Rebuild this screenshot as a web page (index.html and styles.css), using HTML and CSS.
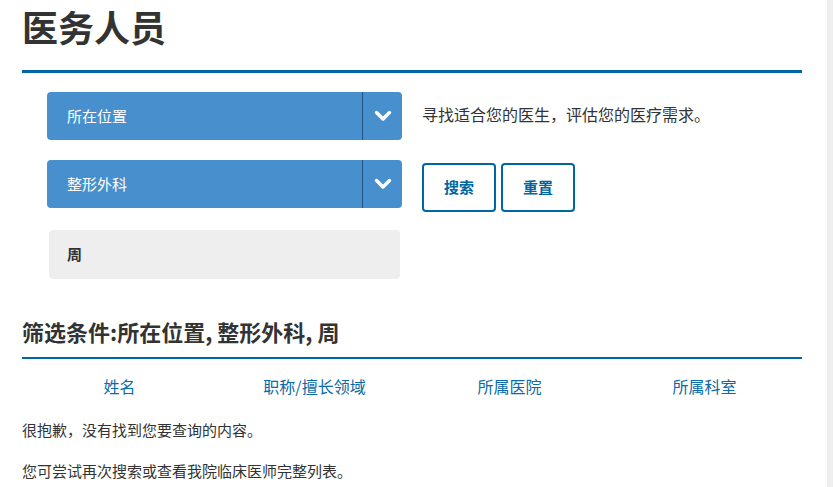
FILE: index.html
```html
<!DOCTYPE html>
<html lang="zh-CN">
<head>
<meta charset="utf-8">
<title>医务人员</title>
<link rel="stylesheet" href="styles.css">
</head>
<body>
<div class="page">
  <header class="page-header">
    <h1 class="page-title">医务人员</h1>
  </header>

  <section class="finder">
    <div class="finder-fields">
      <div class="select">
        <span class="select-label">所在位置</span>
        <span class="select-arrow">
          <svg width="18" height="12" viewBox="0 0 18 12"><polyline points="2.5,2.5 9,9 15.5,2.5" fill="none" stroke="#fff" stroke-width="3.4" stroke-linecap="round" stroke-linejoin="round"/></svg>
        </span>
      </div>
      <div class="select">
        <span class="select-label">整形外科</span>
        <span class="select-arrow">
          <svg width="18" height="12" viewBox="0 0 18 12"><polyline points="2.5,2.5 9,9 15.5,2.5" fill="none" stroke="#fff" stroke-width="3.4" stroke-linecap="round" stroke-linejoin="round"/></svg>
        </span>
      </div>
      <div class="text-input">周</div>
    </div>
    <div class="finder-side">
      <p class="finder-desc">寻找适合您的医生，评估您的医疗需求。</p>
      <div class="finder-actions">
        <button class="btn" type="button">搜索</button>
        <button class="btn" type="button">重置</button>
      </div>
    </div>
  </section>

  <h2 class="filter-title">筛选条件:所在位置, 整形外科, 周</h2>

  <div class="columns">
    <span class="col">姓名</span>
    <span class="col">职称/擅长领域</span>
    <span class="col">所属医院</span>
    <span class="col">所属科室</span>
  </div>

  <p class="message first">很抱歉，没有找到您要查询的内容。</p>
  <p class="message">您可尝试再次搜索或查看我院临床医师完整列表。</p>
</div>
</body>
</html>
```

FILE: styles.css
```css
html {
  background: linear-gradient(to left, #eeeeee 6px, #ffffff 6px);
  min-height: 100%;
}
body {
  margin: 0;
  font-family: "Noto Sans CJK SC", "Liberation Sans", sans-serif;
  color: #333333;
}
.page {
  width: 780px;
  padding-left: 22px;
}
.page-header {
  border-bottom: 3px solid #00669f;
  padding-top: 5px;
  padding-bottom: 22px;
}
.page-title {
  margin: 0;
  font-size: 36px;
  line-height: 43px;
  font-weight: 700;
  color: #333333;
}
.finder {
  display: flex;
  gap: 20px;
  padding-top: 19px;
  padding-left: 25px;
}
.finder-fields {
  width: 355px;
  display: flex;
  flex-direction: column;
}
.select {
  height: 48px;
  background: #4890cd;
  border-radius: 4px;
  display: flex;
  align-items: stretch;
  color: #ffffff;
  margin-bottom: 20px;
}
.select-label {
  flex: 1;
  display: flex;
  align-items: center;
  padding-left: 20px;
  padding-bottom: 2px;
  font-size: 15px;
}
.select-arrow {
  width: 39px;
  border-left: 1px solid #1a5688;
  display: flex;
  align-items: center;
  justify-content: center;
}
.select + .select {
  margin-bottom: 22px;
}
.text-input {
  margin: 0 2px;
  height: 49px;
  background: #eeeeee;
  border-radius: 4px;
  display: flex;
  align-items: center;
  padding-left: 18px;
  padding-bottom: 3px;
  box-sizing: border-box;
  font-size: 15px;
  font-weight: 700;
  color: #333333;
}
.finder-side {
  display: flex;
  flex-direction: column;
}
.finder-desc {
  margin: 0;
  height: 48px;
  padding-bottom: 4px;
  box-sizing: border-box;
  display: flex;
  align-items: center;
  font-size: 16px;
}
.finder-actions {
  display: flex;
  gap: 5px;
  margin-top: 23px;
}
.btn {
  width: 74px;
  height: 49px;
  border: 2px solid #00669f;
  border-radius: 4px;
  background: #ffffff;
  color: #00669f;
  font-family: inherit;
  font-size: 15px;
  font-weight: 700;
  padding: 0 0 2px;
}
.filter-title {
  margin: 37px 0 0;
  font-size: 22px;
  line-height: 30px;
  font-weight: 700;
  padding-bottom: 11px;
  border-bottom: 2px solid #00669f;
}
.columns {
  display: grid;
  grid-template-columns: repeat(4, 1fr);
  margin-top: 15px;
  line-height: 24px;
}
.col {
  text-align: center;
  font-size: 16px;
  color: #0a6aa6;
}
.message {
  margin: 19px 0 0;
  font-size: 15px;
  line-height: 22px;
}
.message.first {
  margin-top: 21px;
}
```
